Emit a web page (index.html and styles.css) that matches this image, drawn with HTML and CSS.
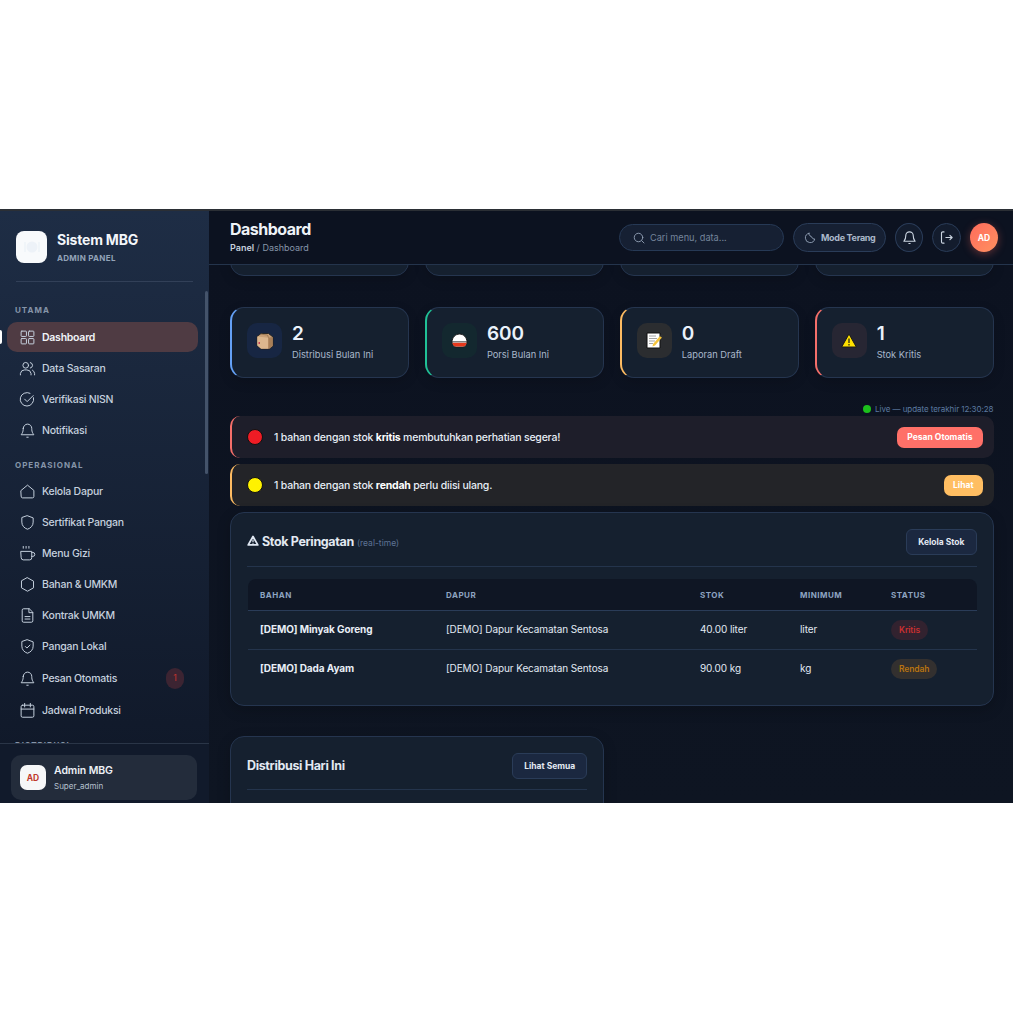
FILE: index.html
```html
<!DOCTYPE html>
<html lang="id">
<head>
    <meta charset="UTF-8">
    <title>Dashboard - Sistem MBG</title>
    <link rel="stylesheet" href="styles.css">
</head>
<body>
<div class="app">
    <!-- Sidebar -->
    <aside class="sidebar">
        <div class="scroll-thumb"></div>
        <div class="brand">
            <div class="brand-logo">
                <svg width="16" height="14" viewBox="0 0 16 14"><circle cx="8" cy="7" r="5.5" fill="#edf2f8"/><path d="M1 2v10M15 2v10" stroke="#edf2f8" stroke-width="1.4"/></svg>
            </div>
            <div>
                <div class="brand-name">Sistem MBG</div>
                <div class="brand-sub">ADMIN PANEL</div>
            </div>
        </div>
        <nav class="nav">
            <div class="nav-label">UTAMA</div>
            <a class="nav-item active">
                <svg class="nav-icon" viewBox="0 0 24 24"><rect x="3" y="3" width="7.5" height="7.5" rx="1"/><rect x="13.5" y="3" width="7.5" height="7.5" rx="1"/><rect x="3" y="13.5" width="7.5" height="7.5" rx="1"/><rect x="13.5" y="13.5" width="7.5" height="7.5" rx="1"/></svg>
                Dashboard
            </a>
            <a class="nav-item">
                <svg class="nav-icon" viewBox="0 0 24 24"><circle cx="9.5" cy="7.5" r="4"/><path d="M2 21v-2a6 6 0 0 1 6-5h3a6 6 0 0 1 6 5v2"/><path d="M16 3.600a4 4 0 0 1 0 7.800"/><path d="M19 14.300a6 6 0 0 1 3 4.700v2"/></svg>
                Data Sasaran
            </a>
            <a class="nav-item">
                <svg class="nav-icon" viewBox="0 0 24 24"><path d="M20.500 9.500A9.500 9.500 0 1 1 15.500 3.200"/><path d="M8 11.500l3.500 3.500L20 6.500"/></svg>
                Verifikasi NISN
            </a>
            <a class="nav-item">
                <svg class="nav-icon" viewBox="0 0 24 24"><path d="M6 9a6 6 0 0 1 12 0c0 6 2 7.500 3 9H3c1-1.500 3-3 3-9z"/><path d="M11 21.500h2"/></svg>
                Notifikasi
            </a>

            <div class="nav-label">OPERASIONAL</div>
            <a class="nav-item">
                <svg class="nav-icon" viewBox="0 0 24 24"><path d="M3 10.500L12 3l9 7.500V19a2 2 0 0 1-2 2H5a2 2 0 0 1-2-2z"/></svg>
                Kelola Dapur
            </a>
            <a class="nav-item">
                <svg class="nav-icon" viewBox="0 0 24 24"><path d="M12 2.500l8 3v6c0 5-3.500 8.500-8 10-4.500-1.500-8-5-8-10v-6z"/></svg>
                Sertifikat Pangan
            </a>
            <a class="nav-item">
                <svg class="nav-icon" viewBox="0 0 24 24"><path d="M3 9h15v9a3 3 0 0 1-3 3H6a3 3 0 0 1-3-3z"/><path d="M18 10.500h1.500a2.800 2.800 0 0 1 0 5.600H18"/><path d="M6 2v2.500M10 2v2.500M14 2v2.500"/></svg>
                Menu Gizi
            </a>
            <a class="nav-item">
                <svg class="nav-icon" viewBox="0 0 24 24"><path d="M12 2.500l8.500 4.800v9.400L12 21.500l-8.500-4.800V7.300z"/></svg>
                Bahan &amp; UMKM
            </a>
            <a class="nav-item">
                <svg class="nav-icon" viewBox="0 0 24 24"><path d="M14 2.500H6.500a2 2 0 0 0-2 2v15a2 2 0 0 0 2 2h11a2 2 0 0 0 2-2V8z"/><path d="M14 2.500V8h5.500"/><path d="M8.500 13.500h7M8.500 17h7"/></svg>
                Kontrak UMKM
            </a>
            <a class="nav-item">
                <svg class="nav-icon" viewBox="0 0 24 24"><path d="M12 2.500l8 3v6c0 5-3.500 8.500-8 10-4.500-1.500-8-5-8-10v-6z"/><path d="M9 12l2.200 2.200L15.500 10"/></svg>
                Pangan Lokal
            </a>
            <a class="nav-item">
                <svg class="nav-icon" viewBox="0 0 24 24"><path d="M6 9a6 6 0 0 1 12 0c0 6 2 7.500 3 9H3c1-1.500 3-3 3-9z"/><path d="M11 21.500h2"/></svg>
                Pesan Otomatis
                <span class="nav-badge">1</span>
            </a>
            <a class="nav-item">
                <svg class="nav-icon" viewBox="0 0 24 24"><rect x="3" y="4.500" width="18" height="17" rx="2"/><path d="M3 10h18M8 2v5M16 2v5"/></svg>
                Jadwal Produksi
            </a>
            <div class="nav-label">DISTRIBUSI</div>
        </nav>
        <div class="sidebar-footer">
            <div class="user-card">
                <div class="user-avatar">AD</div>
                <div>
                    <div class="user-name">Admin MBG</div>
                    <div class="user-role">Super_admin</div>
                </div>
            </div>
        </div>
    </aside>

    <div class="main">
        <!-- Topbar -->
        <header class="topbar">
            <div class="page-head">
                <div class="page-title">Dashboard</div>
                <div class="breadcrumb"><b>Panel</b> / Dashboard</div>
            </div>
            <div class="topbar-actions">
                <div class="search">
                    <svg width="12" height="12" viewBox="0 0 24 24" class="line-icon"><circle cx="11" cy="11" r="8.500"/><path d="M17.500 17.500L22 22"/></svg>
                    <span>Cari menu, data...</span>
                </div>
                <div class="mode-btn">
                    <svg width="12" height="12" viewBox="0 0 24 24" class="line-icon"><path d="M10 2.500a9.500 9.500 0 1 0 11.500 11.500 4 4 0 0 1-5-3 3.500 3.500 0 0 1-3-3 4 4 0 0 1-3.500-5.500z"/></svg>
                    Mode Terang
                </div>
                <div class="round-btn">
                    <svg width="15" height="15" viewBox="0 0 24 24" class="line-icon light"><path d="M6 9a6 6 0 0 1 12 0c0 6 2 7.500 3 9H3c1-1.500 3-3 3-9z"/><path d="M11 21.500h2"/></svg>
                </div>
                <div class="round-btn wide">
                    <svg width="15" height="15" viewBox="0 0 24 24" class="line-icon light"><path d="M8 3H6a2 2 0 0 0-2 2v14a2 2 0 0 0 2 2h2"/><path d="M11 12h10M17.500 8.500L21 12l-3.500 3.500"/></svg>
                </div>
                <div class="top-avatar">AD</div>
            </div>
        </header>

        <main class="content">
            <!-- baris pertama yang sudah ter-scroll -->
            <div class="stat-row stub-row">
                <div class="stat-card"></div>
                <div class="stat-card"></div>
                <div class="stat-card"></div>
                <div class="stat-card"></div>
            </div>

            <div class="stat-row">
                <div class="stat-card blue">
                    <div class="stat-icon">
                        <svg width="18" height="18" viewBox="0 0 18 18"><path d="M1 4.500L5 1.500h7.500L17 5v9l-3.500 3H5l-4-3.500z" fill="#c9a077" stroke="#222" stroke-width=".9"/><path d="M1.300 4.500l11 1.200v11H5l-3.700-3.300z" fill="#dcb78e"/><path d="M12.300 5.700L16.700 5v9l-4.400 2.700z" fill="#a87f58"/><path d="M5 2.200l6.500.8 1 2.700" stroke="#9b7751" stroke-width=".9" fill="none"/><rect x="2.500" y="10" width="1.500" height="2" fill="#c8435a"/></svg>
                    </div>
                    <div>
                        <div class="stat-value">2</div>
                        <div class="stat-label">Distribusi Bulan Ini</div>
                    </div>
                </div>
                <div class="stat-card green">
                    <div class="stat-icon">
                        <svg width="17" height="15" viewBox="0 0 17 15"><path d="M1 9C1 4.500 4.500 1 8.500 1S16 4.500 16 9c0 3-2 5-4 5H5c-2 0-4-2-4-5z" fill="#fff" stroke="#1a1a1a" stroke-width="1"/><path d="M1.400 9.800h14.200c-.2 2.300-1.800 3.700-3.600 3.700H5c-1.800 0-3.400-1.400-3.600-3.700z" fill="#e8391c"/><path d="M1.400 8.800h14.200" stroke="#1a1a1a" stroke-width=".8"/></svg>
                    </div>
                    <div>
                        <div class="stat-value">600</div>
                        <div class="stat-label">Porsi Bulan Ini</div>
                    </div>
                </div>
                <div class="stat-card orange">
                    <div class="stat-icon">
                        <svg width="17" height="17" viewBox="0 0 17 17"><path d="M1 1h13v15H1z" fill="#fff" stroke="#111" stroke-width="1"/><path d="M3 4h7M3 6.500h8M3 9h6M3 11.500h4" stroke="#9a9a9a" stroke-width=".9"/><path d="M7 12l7-8 2 1.500-7 8-2.500 1z" fill="#f5c33b"/><path d="M14 4l1-1.500 2 1.500-1 1.500z" fill="#333"/></svg>
                    </div>
                    <div>
                        <div class="stat-value">0</div>
                        <div class="stat-label">Laporan Draft</div>
                    </div>
                </div>
                <div class="stat-card red">
                    <div class="stat-icon">
                        <svg width="16" height="15" viewBox="0 0 16 15"><path d="M8 1l7.300 13H.7z" fill="#ffe100" stroke="#1a1a1a" stroke-width="1" stroke-linejoin="round"/><path d="M8 5.500v4.500M8 11v1.500" stroke="#1a1a1a" stroke-width="1.200"/></svg>
                    </div>
                    <div>
                        <div class="stat-value">1</div>
                        <div class="stat-label">Stok Kritis</div>
                    </div>
                </div>
            </div>

            <div class="live-row">
                <span class="live-dot"></span>
                Live — update terakhir 12:30:28
            </div>

            <div class="alert alert-red">
                <div class="alert-text">
                    <span class="alert-dot dot-red"></span>
                    <span>1 bahan dengan stok <b>kritis</b> membutuhkan perhatian segera!</span>
                </div>
                <span class="alert-btn btn-red">Pesan Otomatis</span>
            </div>
            <div class="alert alert-yellow">
                <div class="alert-text">
                    <span class="alert-dot dot-yellow"></span>
                    <span>1 bahan dengan stok <b>rendah</b> perlu diisi ulang.</span>
                </div>
                <span class="alert-btn btn-yellow">Lihat</span>
            </div>

            <section class="card">
                <div class="card-head">
                    <div class="card-title">
                        <svg width="12" height="11" viewBox="0 0 16 15" class="warn-icon"><path d="M8 2l6.500 11.500h-13z" fill="none" stroke="#dfe7f2" stroke-width="2.400" stroke-linejoin="round"/><path d="M8 6v3.500M8 10.500v1.500" stroke="#dfe7f2" stroke-width="1.600"/></svg>
                        Stok Peringatan <small>(real-time)</small>
                    </div>
                    <span class="btn-outline">Kelola Stok</span>
                </div>
                <table class="stock-table">
                    <thead>
                        <tr>
                            <th class="col-bahan">BAHAN</th>
                            <th class="col-dapur">DAPUR</th>
                            <th class="col-stok">STOK</th>
                            <th class="col-min">MINIMUM</th>
                            <th>STATUS</th>
                        </tr>
                    </thead>
                    <tbody>
                        <tr>
                            <td class="strong">[DEMO] Minyak Goreng</td>
                            <td>[DEMO] Dapur Kecamatan Sentosa</td>
                            <td>40.00 liter</td>
                            <td>liter</td>
                            <td class="status"><span class="badge badge-red">Kritis</span></td>
                        </tr>
                        <tr>
                            <td class="strong">[DEMO] Dada Ayam</td>
                            <td>[DEMO] Dapur Kecamatan Sentosa</td>
                            <td>90.00 kg</td>
                            <td>kg</td>
                            <td class="status"><span class="badge badge-orange">Rendah</span></td>
                        </tr>
                    </tbody>
                </table>
            </section>

            <div class="two-col">
                <section class="card">
                    <div class="card-head">
                        <div class="card-title">Distribusi Hari Ini</div>
                        <span class="btn-outline">Lihat Semua</span>
                    </div>
                </section>
            </div>
        </main>
    </div>
</div>
</body>
</html>
```

FILE: styles.css
```css
/* Halaman */
* {
    box-sizing: border-box;
}

body {
    margin: 0;
    padding-top: 209px;
    background: #fff;
    font-family: 'Inter', 'Noto Sans', sans-serif;
    color: #dfe7f2;
}

.app {
    display: flex;
    height: 594px;
    overflow: hidden;
    background: #0d1320;
    border-top: 2px solid #2b2f35;
}

/* Sidebar */
.sidebar {
    position: relative;
    display: flex;
    flex-direction: column;
    width: 209px;
    flex-shrink: 0;
    background: linear-gradient(180deg, #1e2d45, #0f1727);
}

.scroll-thumb {
    position: absolute;
    top: 80px;
    right: 1px;
    width: 3px;
    height: 183px;
    border-radius: 2px;
    background: #44536a;
}

.brand {
    display: flex;
    align-items: center;
    gap: 10px;
    height: 71px;
    margin: 0 16px;
    padding-top: 1px;
    border-bottom: 1px solid #324058;
    flex-shrink: 0;
}

.brand-logo {
    display: flex;
    align-items: center;
    justify-content: center;
    width: 31px;
    height: 32px;
    border-radius: 8px;
    background: #f8fafc;
}

.brand-name {
    font-size: 14px;
    font-weight: 700;
    letter-spacing: -0.2px;
    color: #f3f6fa;
}

.brand-sub {
    margin-top: 5px;
    font-size: 8px;
    font-weight: 700;
    letter-spacing: 0.3px;
    color: #93a3b8;
}

.nav {
    flex: 1;
    min-height: 0;
    overflow: hidden;
    padding: 0 11px 0 7px;
}

.nav-label {
    padding: 14px 8px 6px;
    font-size: 8px;
    line-height: 10px;
    font-weight: 700;
    letter-spacing: 1px;
    color: #8695a9;
}

.nav-label:first-child {
    padding: 23px 8px 7px;
}

.nav-item {
    position: relative;
    display: flex;
    align-items: center;
    gap: 6px;
    min-height: 30px;
    margin-bottom: 1px;
    padding: 5.5px 14px 5.5px 12px;
    border-radius: 10px;
    font-size: 10.5px;
    font-weight: 500;
    letter-spacing: -0.25px;
    color: #c5d0de;
}

.nav-item.active {
    background: #4f3b43;
    color: #f1f4f8;
    font-weight: 600;
}

.nav-item.active::before {
    content: "";
    position: absolute;
    left: -7px;
    top: 8px;
    width: 2px;
    height: 14px;
    border-radius: 0 2px 2px 0;
    background: #fff;
}

.nav-icon {
    width: 17px;
    height: 17px;
    flex-shrink: 0;
    fill: none;
    stroke: #c5d0de;
    stroke-width: 1.400;
    stroke-linecap: round;
    stroke-linejoin: round;
}

.nav-badge {
    display: flex;
    align-items: center;
    justify-content: center;
    width: 18px;
    height: 21px;
    margin-left: auto;
    border-radius: 9px;
    background: #3c2432;
    font-size: 8.5px;
    color: #b8322f;
}

.sidebar-footer {
    flex-shrink: 0;
    padding: 11px 12px 3px 11px;
    border-top: 1px solid #2a3547;
    background: #111a2b;
}

.user-card {
    display: flex;
    align-items: center;
    gap: 8px;
    height: 45px;
    padding: 0 9px;
    border-radius: 10px;
    background: #232c3b;
}

.user-avatar {
    display: flex;
    align-items: center;
    justify-content: center;
    width: 26px;
    height: 25px;
    border-radius: 7px;
    background: #f6f7f8;
    font-size: 8.5px;
    font-weight: 700;
    color: #c0392b;
}

.user-name {
    font-size: 10.5px;
    font-weight: 600;
    letter-spacing: -0.1px;
    color: #edf1f6;
}

.user-role {
    margin-top: 4px;
    font-size: 8px;
    color: #b6c1cf;
}

/* Topbar */
.main {
    flex: 1;
    min-width: 0;
    display: flex;
    flex-direction: column;
}

.topbar {
    display: flex;
    align-items: center;
    justify-content: space-between;
    height: 54px;
    flex-shrink: 0;
    padding: 0 15px 0 21px;
    background: #0c1220;
    border-bottom: 1px solid #24344c;
}

.page-head {
    padding-bottom: 4px;
}

.page-title {
    font-size: 16px;
    font-weight: 700;
    letter-spacing: -0.5px;
    color: #eef2f7;
}

.breadcrumb {
    margin-top: 3px;
    font-size: 9px;
    color: #8695a9;
}

.breadcrumb b {
    font-weight: 600;
    color: #c5d0de;
}

.topbar-actions {
    display: flex;
    align-items: center;
    gap: 9px;
}

.line-icon {
    flex-shrink: 0;
    fill: none;
    stroke: #94a3b8;
    stroke-width: 1.800;
    stroke-linecap: round;
    stroke-linejoin: round;
}

.line-icon.light {
    stroke: #cbd5e1;
}

.search {
    display: flex;
    align-items: center;
    gap: 5px;
    width: 165px;
    height: 27px;
    padding: 0 13px;
    border: 1px solid #263955;
    border-radius: 14px;
    background: #162033;
    font-size: 9.200px;
    color: #75859b;
}

.mode-btn {
    display: flex;
    align-items: center;
    gap: 5px;
    width: 93px;
    height: 29px;
    padding: 0 10px;
    border: 1px solid #2a3c58;
    border-radius: 15px;
    background: #162033;
    font-size: 9px;
    font-weight: 700;
    letter-spacing: -0.3px;
    color: #aab8ca;
    white-space: nowrap;
}

.round-btn {
    display: flex;
    align-items: center;
    justify-content: center;
    width: 28px;
    height: 29px;
    border: 1px solid #2a3c58;
    border-radius: 50%;
    background: #131c2d;
}

.round-btn.wide {
    width: 29px;
}

.top-avatar {
    display: flex;
    align-items: center;
    justify-content: center;
    width: 28px;
    height: 29px;
    border-radius: 50%;
    background: linear-gradient(135deg, #ff6b5c, #ff9160);
    box-shadow: 0 2px 8px rgba(255, 107, 92, 0.35);
    font-size: 8.500px;
    font-weight: 700;
    color: #fff;
}

/* Konten */
.content {
    flex: 1;
    min-height: 0;
    overflow: hidden;
    padding: 0 19.5px 0 21px;
    background: linear-gradient(180deg, #0c1220, #0e1522);
}

.stat-row {
    display: grid;
    grid-template-columns: repeat(4, 1fr);
    gap: 16px;
}

.stub-row {
    margin-top: -60px;
    margin-bottom: 31px;
}

.stat-card {
    display: flex;
    align-items: flex-start;
    gap: 10px;
    height: 71px;
    padding: 15px 16px 15px 15px;
    border: 1px solid #25354f;
    border-radius: 14px;
    background: #15202f;
    box-shadow: 0 4px 12px rgba(0, 0, 0, 0.15);
}

.stat-card.blue { border-left: 2px solid #64a0f5; }
.stat-card.green { border-left: 2px solid #20c197; }
.stat-card.orange { border-left: 2px solid #fdbb62; }
.stat-card.red { border-left: 2px solid #f56f6a; }

.stat-icon {
    display: flex;
    align-items: center;
    justify-content: center;
    width: 35px;
    height: 35px;
    flex-shrink: 0;
    border-radius: 10px;
}

.blue .stat-icon { background: #172643; }
.green .stat-icon { background: #13282f; }
.orange .stat-icon { background: #2b2d30; }
.red .stat-icon { background: #272633; }

.stat-value {
    font-size: 19px;
    line-height: 22px;
    font-weight: 600;
    color: #eaf2fb;
}

.stat-label {
    margin-top: 4px;
    font-size: 9.300px;
    color: #a9b8cb;
}

.live-row {
    display: flex;
    align-items: center;
    justify-content: flex-end;
    gap: 4px;
    height: 12px;
    margin-top: 25px;
    font-size: 8px;
    letter-spacing: -0.05px;
    color: #5c7aa0;
}

.live-dot {
    width: 8px;
    height: 8px;
    border-radius: 50%;
    background: #1cc01c;
}

.alert {
    display: flex;
    align-items: center;
    justify-content: space-between;
    height: 42px;
    margin-top: 6px;
    padding: 0 11px 0 15px;
    border-radius: 10px;
    font-size: 10.500px;
    font-weight: 500;
    letter-spacing: -0.2px;
    color: #e6edf5;
}

.live-row + .alert {
    margin-top: 1px;
}

.alert b {
    font-weight: 700;
    color: #fff;
}

.alert-red {
    background: #1e1e2a;
    border-left: 2px solid #f56f6a;
}

.alert-yellow {
    background: #232428;
    border-left: 2px solid #fdbb62;
}

.alert-text {
    display: flex;
    align-items: center;
    gap: 11px;
}

.alert-dot {
    width: 16px;
    height: 16px;
    border-radius: 50%;
    border: 1px solid #111;
}

.dot-red { background: #ee1c25; }
.dot-yellow { background: #fff200; }

.alert-btn {
    display: flex;
    align-items: center;
    height: 21px;
    padding: 0 9px;
    border-radius: 7px;
    font-size: 8.500px;
    font-weight: 700;
    letter-spacing: 0;
    color: #fff;
}

.btn-red {
    padding: 0 10px;
    background: #ff7068;
}

.btn-yellow { background: #ffbe62; }

.card {
    padding: 16px;
    border: 1px solid #25354f;
    border-radius: 14px;
    background: #15202f;
    box-shadow: 0 4px 14px rgba(0, 0, 0, 0.2);
}

.alert + .card {
    margin-top: 6px;
}

.card-head {
    display: flex;
    align-items: center;
    justify-content: space-between;
    height: 38px;
    padding-bottom: 11px;
    border-bottom: 1px solid #24344c;
}

.card-title {
    display: flex;
    align-items: baseline;
    gap: 3px;
    margin-top: -2px;
    font-size: 12.500px;
    font-weight: 700;
    letter-spacing: -0.35px;
    color: #e3e9f2;
}

.card-title small {
    margin-left: 0;
    font-size: 8.500px;
    font-weight: 400;
    letter-spacing: 0;
    color: #5d7394;
}

.btn-outline {
    display: flex;
    align-items: center;
    height: 26px;
    padding: 0 11px;
    border: 1px solid #2a3c58;
    border-radius: 6px;
    background: #1b2840;
    font-size: 8.500px;
    font-weight: 700;
    color: #e3e9f2;
}

.stock-table {
    width: 729px;
    margin: 12px 0 0 1px;
    table-layout: fixed;
    border-collapse: collapse;
    font-size: 10px;
    letter-spacing: -0.1px;
}

.stock-table th {
    height: 31px;
    padding: 1px 12px 0;
    background: #0f1624;
    border-bottom: 1px solid #2a3c58;
    font-size: 8px;
    font-weight: 700;
    letter-spacing: 0.5px;
    text-align: left;
    color: #8ea4c1;
}

.stock-table th:first-child { border-radius: 8px 0 0 0; }
.stock-table th:last-child { border-radius: 0 8px 0 0; }

.col-bahan { width: 186px; }
.col-dapur { width: 254px; }
.col-stok { width: 100px; }
.col-min { width: 91px; }

.stock-table td {
    height: 39px;
    padding: 0 12px 2px;
    border-bottom: 1px solid #24344c;
    color: #e2eaf4;
}

.stock-table td.status {
    padding-bottom: 0;
}

.stock-table tr:last-child td {
    height: 40px;
    border-bottom: none;
}

.stock-table td.strong {
    font-weight: 700;
    color: #e8eef6;
}

.badge {
    display: inline-block;
    padding: 4px 8px;
    border-radius: 10px;
    font-size: 8.500px;
    line-height: 12px;
    font-weight: 600;
}

.badge-red {
    background: #32222f;
    color: #c93030;
}

.badge-orange {
    background: #33302f;
    color: #b8730f;
}

.two-col {
    display: grid;
    grid-template-columns: 1fr 1fr;
    gap: 15px;
    margin-top: 30px;
}

.two-col .card {
    height: 200px;
}

.two-col .card-head {
    height: 37px;
    padding-bottom: 10px;
}
```
